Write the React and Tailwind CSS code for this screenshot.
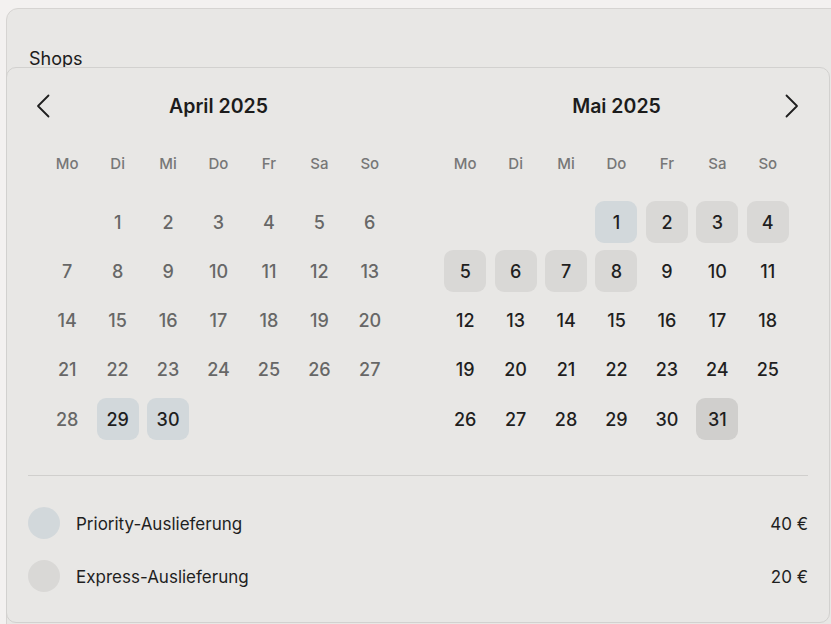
import React from 'react';

// date styles: priority = blue-grey, express = grey, strong = darker grey
const PRIORITY = 'bg-[#d2d8db]';
const EXPRESS = 'bg-[#d9d8d6]';
const STRONG = 'bg-[#d0cfcd]';

const WEEKDAYS = ['Mo', 'Di', 'Mi', 'Do', 'Fr', 'Sa', 'So'];

const april = {
  title: 'April 2025',
  offset: 1,
  days: 30,
  marks: { 29: PRIORITY, 30: PRIORITY },
  muted: (d) => d < 29,
};

const may = {
  title: 'Mai 2025',
  offset: 3,
  days: 31,
  marks: { 1: PRIORITY, 2: EXPRESS, 3: EXPRESS, 4: EXPRESS, 5: EXPRESS, 6: EXPRESS, 7: EXPRESS, 8: EXPRESS, 31: STRONG },
  muted: () => false,
};

const Chevron = ({ dir }) => (
  <svg width="14" height="24" viewBox="0 0 14 24" fill="none" stroke="#1f1f1f" strokeWidth="1.8" strokeLinecap="round" strokeLinejoin="round">
    {dir === 'left' ? <path d="M12.5 1.5 L2 12 L12.5 22.5" /> : <path d="M1.5 1.5 L12 12 L1.5 22.5" />}
  </svg>
);

const Month = ({ month, nav }) => {
  const cells = [];
  for (let i = 0; i < month.offset; i++) cells.push(null);
  for (let d = 1; d <= month.days; d++) cells.push(d);

  return (
    <div className="w-[353px]">
      <div className="flex h-10 items-center">
        {nav === 'left' ? (
          <button className="-ml-[15px] flex h-8 w-8 items-center justify-center"><Chevron dir="left" /></button>
        ) : (
          <div className="-ml-[15px] w-8" />
        )}
        <div className="flex-1 pt-px text-center text-[19.5px] font-semibold text-[#1c1c1c]">{month.title}</div>
        {nav === 'right' ? (
          <button className="-mr-[15px] flex h-8 w-8 items-center justify-center"><Chevron dir="right" /></button>
        ) : (
          <div className="-mr-[15px] w-8" />
        )}
      </div>

      <div className="mt-[17px] grid h-[42px] grid-cols-7 items-center">
        {WEEKDAYS.map((w) => (
          <div key={w} className="text-center text-[15px] font-medium text-[#777]">{w}</div>
        ))}
      </div>

      <div className="mt-4 grid grid-cols-7 gap-y-[7.25px]">
        {cells.map((d, i) => (
          <div key={i} className="flex justify-center">
            {d ? (
              <div
                className={`flex h-[42px] w-[42px] items-center justify-center rounded-[9px] text-[18px] font-medium ${month.marks[d] || ''} ${
                  month.muted(d) ? 'text-[#676767]' : 'text-[#1f1f1f]'
                }`}
              >
                {d}
              </div>
            ) : (
              <div className="h-[42px] w-[42px]" />
            )}
          </div>
        ))}
      </div>
    </div>
  );
};

const Option = ({ swatch, label, price }) => (
  <div className="flex h-8 items-center">
    <span className={`h-8 w-8 rounded-full ${swatch}`} />
    <span className="ml-4 flex-1 pt-[3px] text-[17px] text-[#1f1f1f]">{label}</span>
    <span className="pt-[3px] text-[17px] text-[#1f1f1f]">{price}</span>
  </div>
);

export default function App() {
  return (
    <div className="h-[624px] overflow-hidden bg-[#f3f1f0] pl-[6px] pt-2 font-['Inter',sans-serif]">
      <div className="relative h-[700px] w-[840px] rounded-tl-[12px] border border-[#d6d4d2] bg-[#e8e7e5]">
        <div className="px-[22px] pt-[38px] text-[18px] leading-6 text-[#1c1c1c]">Shops</div>

        {/* date picker popover over the card */}
        <div className="absolute left-[-1px] top-[58px] h-[556px] w-[824px] rounded-[10px] border border-[#d2d1cf] bg-[#e8e7e5] px-[21px] pt-[18px]">
          <div className="flex gap-[45px] px-[14px]">
            <Month month={april} nav="left" />
            <Month month={may} nav="right" />
          </div>

          <div className="mt-[35px] h-px bg-[#d0cfcd]" />

          <div className="mt-[31px] flex flex-col gap-[21px]">
            <Option swatch="bg-[#d2d8db]" label="Priority-Auslieferung" price="40 €" />
            <Option swatch="bg-[#d9d8d6]" label="Express-Auslieferung" price="20 €" />
          </div>
        </div>
      </div>
    </div>
  );
}
